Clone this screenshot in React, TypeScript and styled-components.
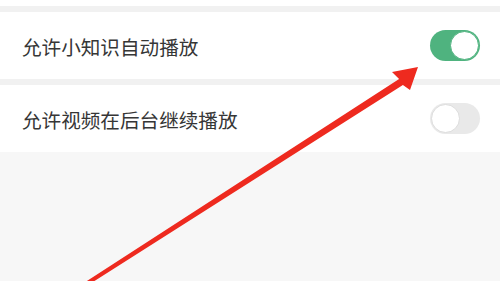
import React from "react";
import styled, { createGlobalStyle } from "styled-components";

const Global = createGlobalStyle`
  html, body { margin: 0; padding: 0; background: #f7f7f7; }
  body { font-family: "Noto Sans CJK SC", "Noto Sans", sans-serif; }
  #root { width: 500px; height: 281px; overflow: hidden; }
`;

const Page = styled.div`
  position: relative;
  width: 500px;
  height: 281px;
  background: #f7f7f7;
  display: flex;
  flex-direction: column;
`;

const TopStrip = styled.div`
  height: 6px;
  background: #ffffff;
`;

const Divider = styled.div`
  height: 6px;
  background: #f1f1f1;
`;

const Row = styled.div`
  height: 67px;
  background: #ffffff;
  display: flex;
  align-items: center;
  justify-content: space-between;
  padding: 0 20px 0 22px;
`;

const Label = styled.span`
  font-size: 19.6px;
  color: #363636;
  line-height: 1;
  padding-top: 2px;
`;

const Track = styled.div<{ $on: boolean }>`
  width: 50px;
  height: 31px;
  border-radius: 16px;
  box-sizing: border-box;
  background: ${(p) => (p.$on ? "#4fb37f" : "#e9e9e9")};
  display: flex;
  align-items: center;
  justify-content: ${(p) => (p.$on ? "flex-end" : "flex-start")};
  padding: 1px;
`;

const Knob = styled.div<{ $on: boolean }>`
  width: 29px;
  height: 29px;
  border-radius: 50%;
  background: #ffffff;
  box-sizing: border-box;
  border: 1px solid ${(p) => (p.$on ? "#4fb37f" : "#dcdcdc")};
`;

const Overlay = styled.svg`
  position: absolute;
  left: 0;
  top: 0;
  pointer-events: none;
`;

function Toggle({ on }: { on: boolean }) {
  return (
    <Track $on={on}>
      <Knob $on={on} />
    </Track>
  );
}

export default function App() {
  return (
    <>
      <Global />
      <Page>
        <TopStrip />
        <Divider />
        <Row>
          <Label>允许小知识自动播放</Label>
          <Toggle on />
        </Row>
        <Divider />
        <Row>
          <Label>允许视频在后台继续播放</Label>
          <Toggle on={false} />
        </Row>
        <Overlay width="500" height="281" viewBox="0 0 500 281">
          <polygon
            points="84.9,282.3 399.1,79.1 392,72 418,67 410,90 402.9,84.9 87.1,285.7"
            fill="#ee2a1f"
          />
        </Overlay>
      </Page>
    </>
  );
}
